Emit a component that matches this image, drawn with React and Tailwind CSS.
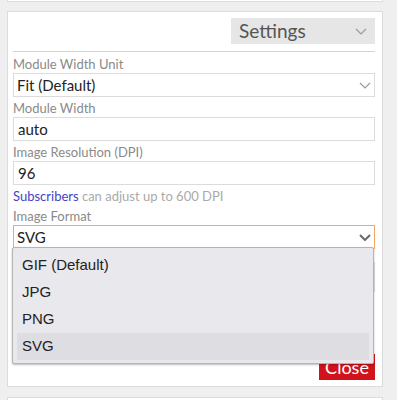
import { useState } from 'react';

const formats = ['GIF (Default)', 'JPG', 'PNG', 'SVG'];

function Chevron({ className = 'text-[#9a9a9a]', width = 1.2 }) {
  return (
    <svg viewBox="0 0 12 7" className={`h-[7px] w-[12px] ${className}`} fill="none">
      <path d="M1 1l5 5 5-5" stroke="currentColor" strokeWidth={width} />
    </svg>
  );
}

function Label({ children }) {
  return (
    <div className="h-[18px] text-[13px] leading-[18px] text-[#8a8a8a]">{children}</div>
  );
}

function SelectBox({ value, focused }) {
  return (
    <div
      className={`flex h-[24px] items-center justify-between border pl-[3px] pr-[3px] text-[15px] text-[#222] ${
        focused ? 'border-[#f5a662]' : 'border-[#dcdcdc]'
      }`}
    >
      <span>{value}</span>
      {focused ? (
        <Chevron className="text-[#6a6a6a]" width={2} />
      ) : (
        <Chevron />
      )}
    </div>
  );
}

function TextBox({ value }) {
  return (
    <div className="flex h-[24px] items-center border border-[#dcdcdc] pl-[4px] text-[15px] text-[#222]">
      {value}
    </div>
  );
}

export default function App() {
  const [format] = useState('SVG');

  return (
    <div className="h-[400px] w-[397px] overflow-hidden bg-[#efefef] font-['Lato',sans-serif]">
      <div className="ml-[7px] h-[2px] w-[376px] border-x border-b border-[#dcdcdc] bg-white" />

      <div className="ml-[7px] mt-[9px] h-[376px] w-[376px] border border-[#dcdcdc] bg-white pl-[5px] pr-[7px]">
        <div className="flex justify-end pt-[6px]">
          <button className="flex h-[26px] w-[144px] items-center justify-between bg-[#e6e6e6] pl-[8px] pr-[8px] text-[19px] text-[#555]">
            <span>Settings</span>
            <Chevron />
          </button>
        </div>
        <div className="mt-[7px] border-t border-[#d4d4d4]" />

        <div className="mt-[3px]">
          <Label>Module Width Unit</Label>
          <SelectBox value="Fit (Default)" />
          <div className="mt-[2px]" />
          <Label>Module Width</Label>
          <TextBox value="auto" />
          <div className="mt-[2px]" />
          <Label>Image Resolution (DPI)</Label>
          <TextBox value="96" />
          <div className="mt-[2px] h-[18px] text-[13px] leading-[18px] text-[#aaa]">
            <span className="text-[#4343c2]">Subscribers</span> can adjust up to 600 DPI
          </div>
          <div className="mt-[2px]" />
          <Label>Image Format</Label>

          <div className="relative">
            <SelectBox value={format} focused />
            <div className="absolute left-[-1px] top-[22px] z-10 w-[362px] rounded-[2px] border border-[#b4b4b4] bg-[#e9e8ed] px-[4px] pb-[3px] pt-[4px] font-['Liberation_Sans',Arial,sans-serif] text-[15px] text-[#222] shadow-[0_1px_2px_rgba(0,0,0,0.25)]">
              {formats.map((f) => (
                <div
                  key={f}
                  className={`flex h-[27px] items-center pl-[5px] ${
                    f === format ? 'bg-[#dedde2]' : ''
                  }`}
                >
                  {f}
                </div>
              ))}
            </div>
          </div>

          <div className="mt-[13px] h-[30px] border border-[#dcdcdc]" />

          <div className="mt-[62px] flex justify-end">
            <button className="flex h-[26px] w-[56px] items-center justify-center bg-[#d2121c] text-[18px] text-white">
              Close
            </button>
          </div>
        </div>
      </div>

      <div className="ml-[7px] mt-[10px] h-[10px] w-[376px] border border-[#dcdcdc] bg-white" />
    </div>
  );
}
